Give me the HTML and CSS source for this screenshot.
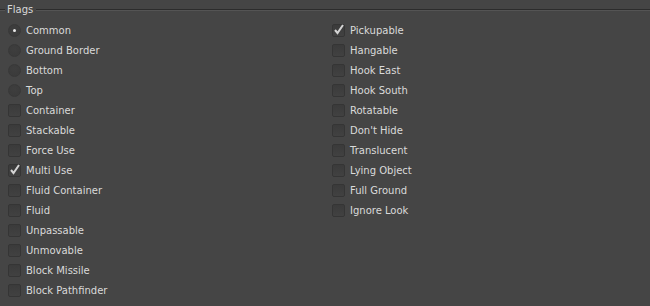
FILE: index.html
```html
<!DOCTYPE html>
<html>
<head>
<meta charset="utf-8">
<link rel="stylesheet" href="styles.css">
</head>
<body>
<div class="group">
  <div class="legend">
    <span class="line short"></span>
    <span class="title">Flags</span>
    <span class="line grow"></span>
  </div>
  <div class="cols">
    <div class="col">
      <div class="row"><span class="radio on"></span><span class="label">Common</span></div>
      <div class="row"><span class="radio"></span><span class="label">Ground Border</span></div>
      <div class="row"><span class="radio"></span><span class="label">Bottom</span></div>
      <div class="row"><span class="radio"></span><span class="label">Top</span></div>
      <div class="row"><span class="box"></span><span class="label">Container</span></div>
      <div class="row"><span class="box"></span><span class="label">Stackable</span></div>
      <div class="row"><span class="box"></span><span class="label">Force Use</span></div>
      <div class="row"><span class="box"><svg viewBox="0 0 13 13" width="13" height="13"><path d="M3 7 L5.5 10 L11 2" fill="none" stroke="#d4d4d4" stroke-width="2"/></svg></span><span class="label">Multi Use</span></div>
      <div class="row"><span class="box"></span><span class="label">Fluid Container</span></div>
      <div class="row"><span class="box"></span><span class="label">Fluid</span></div>
      <div class="row"><span class="box"></span><span class="label">Unpassable</span></div>
      <div class="row"><span class="box"></span><span class="label">Unmovable</span></div>
      <div class="row"><span class="box"></span><span class="label">Block Missile</span></div>
      <div class="row"><span class="box"></span><span class="label">Block Pathfinder</span></div>
    </div>
    <div class="col">
      <div class="row"><span class="box"><svg viewBox="0 0 13 13" width="13" height="13"><path d="M3 7 L5.5 10 L11 2" fill="none" stroke="#d4d4d4" stroke-width="2"/></svg></span><span class="label">Pickupable</span></div>
      <div class="row"><span class="box"></span><span class="label">Hangable</span></div>
      <div class="row"><span class="box"></span><span class="label">Hook East</span></div>
      <div class="row"><span class="box"></span><span class="label">Hook South</span></div>
      <div class="row"><span class="box"></span><span class="label">Rotatable</span></div>
      <div class="row"><span class="box"></span><span class="label">Don't Hide</span></div>
      <div class="row"><span class="box"></span><span class="label">Translucent</span></div>
      <div class="row"><span class="box"></span><span class="label">Lying Object</span></div>
      <div class="row"><span class="box"></span><span class="label">Full Ground</span></div>
      <div class="row"><span class="box"></span><span class="label">Ignore Look</span></div>
    </div>
  </div>
</div>
</body>
</html>
```

FILE: styles.css
```css
html, body {
  margin: 0;
  padding: 0;
  background: #454545;
  width: 650px;
  height: 306px;
  overflow: hidden;
}
body {
  font-family: "DejaVu Sans", sans-serif;
  font-size: 10px;
  color: #dadada;
}
.group {
  display: flex;
  flex-direction: column;
}
.legend {
  display: flex;
  align-items: center;
  height: 19px;
}
.line {
  height: 1px;
  border-top: 1px solid #2c2c2c;
  background: #545454;
  margin-top: 1px;
}
.line.short { width: 5px; }
.line.grow { flex: 1; }
.title {
  padding: 0 3px 0 2px;
  line-height: 12px;
  color: #d8d8d8;
}
.cols {
  display: flex;
  padding-top: 1px;
}
.col {
  display: flex;
  flex-direction: column;
}
.col:first-child {
  width: 324px;
  padding-left: 8px;
}
.row {
  display: flex;
  align-items: center;
  height: 20px;
  gap: 5px;
}
.box {
  width: 11px;
  height: 11px;
  border: 1px solid #353535;
  background: linear-gradient(#3b3b3b, #414141);
  border-radius: 2px;
  position: relative;
  flex: none;
}
.box svg {
  position: absolute;
  left: -1px;
  top: -2px;
}
.radio {
  width: 11px;
  height: 11px;
  border: 1px solid #383838;
  border-radius: 50%;
  background: radial-gradient(circle at 50% 40%, #3e3e3e, #3a3a3a);
  position: relative;
  flex: none;
}
.radio.on::after {
  content: "";
  position: absolute;
  left: 4px;
  top: 4px;
  width: 3px;
  height: 3px;
  border-radius: 50%;
  background: #e8e8e8;
}
.label {
  white-space: nowrap;
}
```
